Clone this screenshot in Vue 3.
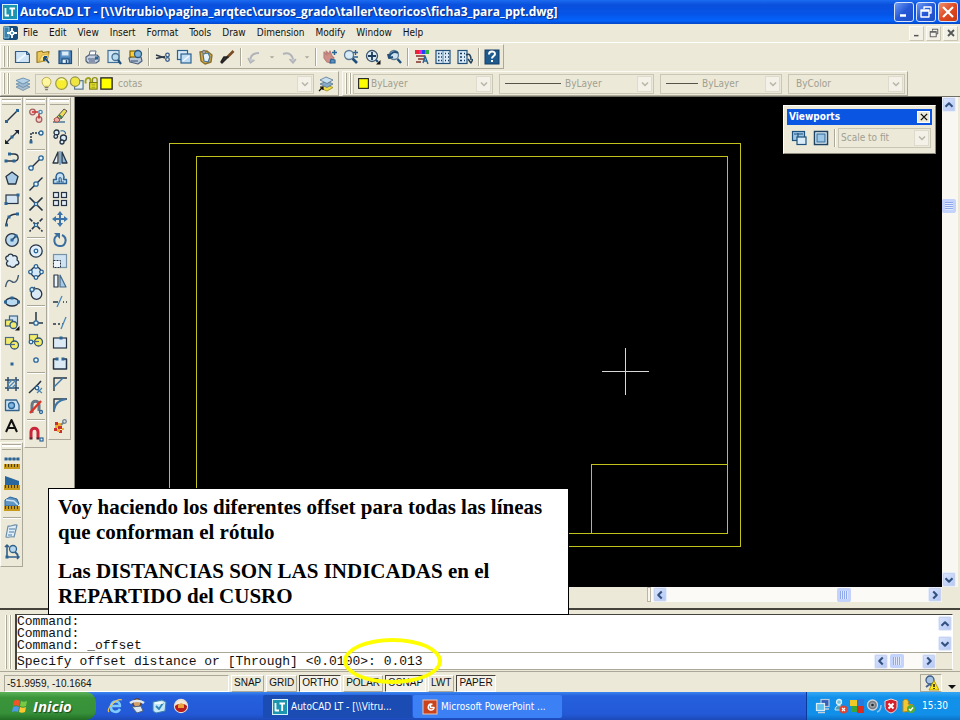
<script setup>
import { h } from 'vue'

const D = '#263445'
const B = '#2a6596'
const L = '#b9d7ee'

const line = (d, c = D, w = 1.4, f = 'none') =>
  `<path d="${d}" fill="${f}" stroke="${c}" stroke-width="${w}" stroke-linejoin="round"/>`
const dot = (x, y) => `<rect x="${x - 1.5}" y="${y - 1.5}" width="3" height="3" fill="${B}"/>`
const ring = (x, y, r = 2, f = '#e8f5ff', c = B) =>
  `<circle cx="${x}" cy="${y}" r="${r}" fill="${f}" stroke="${c}" stroke-width="1.3"/>`
const box = (x, y, w, hh, f = L, c = D) =>
  `<rect x="${x}" y="${y}" width="${w}" height="${hh}" fill="${f}" stroke="${c}" stroke-width="1.2"/>`
const lens = ring(6, 6, 4.5, '#d8ebf6', '#5f7c94') + line('M9.5 9.5L14 14', '#1d4d7a', 2.6)
const ruler = '<rect x="0" y="10" width="16" height="5" fill="#c79a1c"/>' +
  line('M1.5 10v3M4.5 10v3M7.5 10v3M10.5 10v3M13.5 10v3', '#4d3c0b', 1)
const shapes = box(1.5, 2.5, 8, 7, '#f3ec6a', '#4c6a83') + ring(10.5, 10, 4, '#f3ec6a', '#33566f') +
  line('M6 9.5h5', '#4c6a83', 1.2)

const glyphs = {
  new: line('M1.5 2.5h11l3 3v8h-14z', '#315d86', 1.2, '#cfe4f5') + line('M3.5 12L12 5', '#eef7fd', 2) + line('M12.5 2.5v3h3', '#315d86', 1),
  open: line('M2 3l5-1 1 1.5 6-1-2 9-10 2z', '#9a7a20', 1.2, '#ecc95c') + line('M4 12L7 6l7-1-4 7z', '#d9b44e', 1.2, '#fbe28b') + line('M9 8l5 6M9 8v4M9 8h3', '#1d4d7a', 1.8),
  save: box(2, 2, 12.5, 12.5, '#4d86bd', '#224e7a') + box(4.5, 2, 7.5, 5, '#dcecf8', '#6f9ec7') + box(5, 10, 7, 4.5, '#e9f2f8', '#224e7a') + line('M9.5 11v3', '#224e7a', 1.5),
  print: line('M5 7l1-5h6l-1 5', '#5d6f84', 1, '#fff') + line('M2 8l3-2h8l2 2v4l-3 2H4l-2-2z', '#4e617c', 1.2, '#c4cede') + line('M4 10h8M5 12h6', '#46597a', 1) + dot(12.5, 9),
  preview: box(2, 1.5, 11, 12, '#d5e8f7', '#416f97') + ring(9.5, 8, 3.5, '#b9d9ef', '#47708f') + line('M12 11l3 4', '#1d4d7a', 2.2),
  publish: line('M2 9l4-2 8 1 1 4-4 3-8-2z', '#4e617c', 1.2, '#b8c7da') + box(3, 2, 7, 6, '#ffcf30', '#7f6410') + ring(11, 5, 3.5, '#7fb5d9', '#285880') + line('M4 12h7', '#334a68', 1),
  cut: line('M1 6l9 3M1 9.5l9-2', '#2e3b49', 1.5) + ring(12.5, 6, 1.8, 'none', '#385d8a') + ring(12.5, 10.5, 1.8, 'none', '#385d8a'),
  copy: box(1.5, 1.5, 10, 9, '#d7eaf8', '#2d6291') + box(5, 5, 10, 9, '#bfdcf2', '#2d6291') + line('M7 12l6-5', '#eff8ff', 1.5),
  paste: line('M2 3l7-1 5 4-1 7-6 2-4-3z', '#8b6f2a', 1.4, '#d6ac48') + line('M5 5l5-1 2 4-2 5-4-1z', '#41749e', 1.2, '#e6f1fa') + ring(6, 3, 1.5, '#ccc', '#777'),
  brush: line('M14.5 2L8 8.5', '#7a4b24', 2.6) + line('M9 8L3 14l-1-1 3-5z', '#222', 1.5, '#333'),
  undo: line('M3 13c0-6 3-9 9-9', '#b0b3b8', 2) + line('M1 9l2.5 5 4-3', '#b0b3b8', 1.5, '#c5c8cc'),
  redo: line('M2 5c6-2 10 1 10 7', '#b0b3b8', 2) + line('M8.5 10l3.5 4 3-4', '#b0b3b8', 1.5, '#c5c8cc'),
  caret: '<path d="M5 7h6l-3 3z" fill="#a7a79d"/>',
  pan: line('M2 3l3 3-1-4 3 3 1-3 2 5 2 2-3 5-4-1-3-4z', '#b98079', 1.2, '#cf8f86') + line('M12.5 1v5M10 3.5h5', B, 1.5) + line('M9 10l4 1v3h-5z', B, 1.2, '#5b8ebd'),
  zoom: lens + line('M12.5 1v5M10 3.5h5M10 8h5', B, 1.3),
  extents: ring(7, 7, 5.5, '#d8ebf6', '#3c5268') + line('M7 3v8M3 7h8', '#1c3c59', 1.8) + line('M11 11l2 2', '#1d4d7a', 2.2) + '<path d="M15.5 11v4.5H11z" fill="#111"/>',
  zprev: ring(8, 6, 4.5, '#cde1ef', '#5f7c94') + line('M11.5 10L15 14', '#1d4d7a', 2.4) + line('M3 8c2-5 6-6 9-4M2 5l1 4 4-1', '#214d76', 2),
  props: '<path d="M1 1h4v4H1z" fill="#e23"/><path d="M5 1h3v4H5z" fill="#d2d"/><path d="M8 1h3v4H8z" fill="#24e"/><path d="M11 1h4v4h-4z" fill="#2cb53c"/>' + line('M2 7h9M4 10h7M2 13h5', '#9b5f55', 1.8) + line('M9 14l2-7 3 8M9 12h4', B, 1.4),
  center: box(1, 1.5, 14, 13, '#d8e9f7', '#234f78') + line('M8 2v12', '#5d87ab', 1) + line('M3 4.5h1.5M3 8h1.5M3 11.5h1.5M6 4.5h1M6 8h1M6 11.5h1M10 4.5h1M13 4.5h1M10 8h1M13 8h1M10 11.5h1M13 11.5h1', '#16395b', 1.5),
  sheet: box(1, 1.5, 9, 13, '#d8e9f7', '#234f78') + line('M3 4.5h2M3 8h2M3 11.5h2M7 4.5h1M7 8h1M7 11.5h1', '#16395b', 1.6) + line('M9 6c4-2 5 1 5 5M11 10l3 4 2-4', '#23405c', 1.5),
  help: '<rect x="1" y="1" width="14" height="14" fill="#1f5a8f" stroke="#123c62"/>' + line('M5 5.5c0-4 6-4 6-.5 0 2-3 2-3 4.5', '#fff', 2) + '<rect x="7" y="11" width="2" height="2" fill="#fff"/>',
  layers: line('M1 11l7-3 7 3-7 3.5z', '#6c8aa3', .8, '#a9bfd0') + line('M1 8l7-3 7 3-7 3.5z', '#6488a5', .8, '#9dbad1') + line('M1 4.5L8 2l7 2.5L8 8z', '#5c86a8', .8, '#b3d0e6'),
  layersPrev: line('M2 12l7-3 6 2.5L9 15z', '#9c8a20', .8, '#f0dc45') + line('M2 8l7-3 6 3-6 3.5z', '#54738d', .8, '#86aac6') + line('M2 4L8 1l7 3-6 3.5z', '#54738d', .8, '#c7dfef') + line('M1 15l4-4M2 11h3v3', '#111', 1.2),
  bulb: line('M5.5 11C1 6 4 1.5 8 1.5s7 4.5 2.5 9.5z', '#b7a748', 1, '#fff7a0') + line('M6 12.5h4M6.5 14.5h3', '#7d7d72', 1.3),
  sun: ring(8, 8, 6.2, '#f8ee31', '#9b9b48') + line('M5 4.5c2-1.5 4-1.5 6 0', '#fffbb7', 1.5),
  freeze: box(6, 5, 9, 9, '#e4eef5', '#4f7086') + ring(6.5, 6, 5, '#f0e642', '#90904d'),
  lock: line('M2 8c-2-6 5-8 5-3v2', '#a0a018', 2) + line('M9 7V4c0-3 5-3 5 0v3', '#8e8e16', 1.5) + box(6, 7, 8, 7, '#e4e22a', '#7b7b15') + line('M8 9.5h4M8 12h4', '#99991c', 1),
  yellow: '<rect x="2" y="2" width="12" height="12" fill="#ff0" stroke="#222" stroke-width="1.4"/>',
  line: line('M3 13L13 3') + dot(2.5, 13.5) + dot(13.5, 2.5),
  xline: line('M2.5 13.5l11-11') + '<path d="M1 15v-4.5l4.5 4.5zM15 1v4.5L10.500 1z" fill="#1b2430"/>' + dot(8, 8),
  pline: line('M2 11h8c6 0 5-7 0-7H6') + dot(2, 11) + dot(10, 11) + dot(5.5, 4),
  polygon: line('M8 2l6 4.5-2.300 7.500H4.300L2 6.5z', D, 1.3, '#a9cbe6'),
  rect: box(2, 4, 12, 8.5, '#d3e5f3') + dot(2, 12.5) + dot(14, 4),
  arc: line('M2.5 14C2 7 6 3 13 3') + dot(2.5, 14) + dot(5, 6) + dot(13.5, 3),
  circle: ring(8, 8, 6.3, '#bad8ee', D) + line('M8 8l4-4') + dot(8, 8) + dot(12, 4),
  cloud: line('M4 8C1 7 1 3 4 3c1-3 5-2 5 0 3-1 5 1 4 4 3 2 2 5-1 5-1 3-5 3-6 1-3 1-5-3-2-5z', D, 1.3, '#dcebf5'),
  spline: line('M1.5 14c2-10 5-6 7-5s5 0 6-7', '#445a70', 1.4),
  ellipse: '<ellipse cx="8" cy="8" rx="6.5" ry="4" fill="#badaf0" stroke="#263445" stroke-width="1.3"/>' + dot(1.5, 8) + dot(14.5, 8) + dot(8, 4),
  insert: box(5.5, 1, 8, 9, '#c9e0f2', '#3d668a') + box(1.5, 5, 7, 6, '#f3ec6a', '#385a76') + ring(9.5, 10, 3.5, '#f3ec6a', '#335c7e') + '<path d="M15.5 11v4.5H11z" fill="#111"/>',
  block: shapes,
  point: dot(8, 8),
  hatch: line('M4 1v14M12 1v14M1 4h14M1 12h14', '#2b4c6b', 1.5) + line('M4 8l4-4M4 12l8-8M8 12l4-4', '#4a88bc', 1.2),
  region: line('M1.5 3h11l2.5 5v5.5H1.5z', '#33638d', 1.3, '#cce2f3') + ring(7.5, 8.5, 3, '#83b7e0'),
  text: line('M2 14L7.5 2 13 14M4 10h7', '#111', 2),
  track: ring(4.5, 4, 2.8, '#f2d1cc', '#a76262') + ring(12.5, 4, 1.7, '#e8f5ff', '#5588b0') + ring(11, 11.5, 2.8, '#f2d1cc', '#a76262') + line('M4 4h6M11 5.5v5', '#d02f2f', 1.6),
  from: '<path d="M3 12V4h9" fill="none" stroke="#263445" stroke-width="1.5" stroke-dasharray="2 1"/>' + ring(13, 4) + dot(3, 13),
  endpoint: line('M3 13L13 3') + ring(3, 13, 2.2) + ring(13, 3, 2.2),
  midpoint: line('M1.5 14.5l13-13') + ring(8, 8, 2.2),
  inter: line('M1.5 1.5l13 13M14.5 1.5l-13 13', D, 1.7) + ring(8, 8, 1.6),
  appint: '<path d="M1.5 1.5l13 13M14.5 1.5l-13 13" stroke="#263445" stroke-width="1.6" stroke-dasharray="4 1.5"/>' + ring(8, 8, 1.6),
  centerSnap: ring(8, 8, 6.2, '#e0eff9', D) + ring(8, 8, 1.8),
  quadrant: ring(8, 8, 5, '#d5e9f7', D) + ring(8, 2.5, 1.8) + ring(8, 13.5, 1.8) + ring(2.5, 8, 1.8) + ring(13.5, 8, 1.8),
  tangent: ring(8.5, 9, 5.3, '#d9eaf6', D) + line('M2 7l5-5', '#405870', 1.3) + ring(4, 4.5, 2),
  perp: line('M1 12h14M8 1v11', D, 1.5) + ring(8, 12, 2.2),
  insSnap: shapes + ring(3, 10, 1.8),
  node: ring(8, 8, 2.2),
  nearest: line('M1 14c5-5 8-7 12-12', D, 1.5) + line('M9 10l5 4M14 9l-5 5', '#4f84af', 1.2) + ring(9, 9, 1.8),
  noSnap: line('M4 14V6c0-5 7-5 7 0v6', '#697684', 3) + line('M2 14L13 2', '#d83428', 2.4) + ring(13, 13, 1.5),
  osnap: line('M3 12V6c0-5 7-5 7 0v6', '#c9263c', 3) + line('M1.5 12.5h3M8.5 12.5h3', '#52202e', 2) + box(12, 12, 3, 3, '#e4f3fc', B),
  erase: line('M1 14h12', '#3d7197', 1.4) + line('M5 9l7-8 3 2-6 8z', '#55585a', 1, '#f2db55') + line('M2 11l3-2 3 3-2 2H3z', '#a0564e', 1, '#f1aaa2') + line('M7 7l3 3', '#3c7c5b', 2),
  copyObj: ring(4.5, 3.5, 2.5, '#dcecf7', D) + ring(3.8, 7.5, 1.8, '#dcecf7', D) + ring(11.5, 9, 3, '#dcecf7', D) + ring(10, 13, 2, '#dcecf7', D) + line('M8.5 2c4-1 5 1 5 3', B, 1.2),
  mirror: line('M6 2v11H1z', D, 1.3, '#eef4f8') + line('M8 1v14', '#3e7db2', 1.2) + line('M10 2v11h5z', D, 1.3, '#8ebbe0'),
  offset: line('M1.5 13.5V9.5h3c-3-9 10-9 7 0h3v4z', '#2d6291', 1.4, '#c5dff3') + line('M4.5 12h3c-2-6 3-6 1.5 0h3', '#2d6291', 1.2, '#edf6fc'),
  array: box(1.5, 1.5, 5, 5, '#e4edf3') + box(9.5, 1.5, 5, 5, '#e4edf3') + box(1.5, 9.5, 5, 5, '#e4edf3') + box(9.5, 9.5, 5, 5, '#e4edf3'),
  move: line('M8 2v12M2 8h12', '#3c74aa', 2) + '<path d="M8 0l3 4H5zM8 16l3-4H5zM0 8l4-3v6zM16 8l-4-3v6z" fill="#3c74aa"/>',
  rotate: line('M5 3.5C1 6 1.5 13 7 14c7 1 9-8 3-11', '#3b6d9d', 2) + '<path d="M2 1h6v6z" fill="#3b6d9d"/>',
  scale: box(1.5, 1.5, 13, 13, '#cfe3f3', '#7793a8') + '<rect x="1.5" y="7.5" width="7" height="7" fill="#edf5fa" stroke="#263445" stroke-dasharray="2 1"/>',
  stretch: line('M2 14V2h4v12z', D, 1.2, '#eef4f8') + line('M8 14V2l6 12z', '#446b8d', 1.2, '#a9cae4'),
  trim: line('M1 8h5M11 8h1M14 8h1', D, 1.5) + line('M5 13l5-11', '#4c89b8', 1.3),
  extend: line('M1 9h3M6 9h2M10 9h1', D, 1.5) + line('M9 14l5-12', '#4c89b8', 1.3),
  breakPt: box(1.5, 3, 13, 10, '#dceaf5') + dot(9, 3),
  breakObj: line('M5 3H1.5v10h13V3H11', D, 1.5, '#dceaf5') + dot(5, 3) + dot(11, 3),
  chamfer: line('M2 15V2h13', D, 1.4) + line('M2 11l9-9', '#3d76a6', 1.5),
  fillet: line('M2 15V2h13', D, 1.4) + line('M2 13C3 6 7 3 14 2', '#3d76a6', 2),
  explode: '<path d="M3 4h3v3H3zM6 8h4v3H6zM2 10h3v3H2zM7 12h3v3H7z" fill="#c9302b"/><path d="M6 5h3v3H6zM3 7h3v3H3zM5 11h3v3H5zM10 10h2v2h-2z" fill="#efad2b"/>' + line('M9 7l4-4', '#6e8190', 1.8) + ring(12.5, 3.5, 1.8, '#ddd', '#6e8190'),
  distance: line('M2 5h12', '#4d7798', 1) + dot(2, 5) + dot(14, 5) + dot(6, 5) + dot(10, 5) + ruler,
  area: '<path d="M1 1l14 5v4H1z" fill="#28669d"/>' + ruler,
  mass: line('M1 4l5-3 7 2 2 5-2 2H1z', '#28669d', 1, '#6096c4') + line('M2 4l8 1 4 4', '#cfe6f6', 1.5) + ruler,
  list: line('M4 3c4 1 5-2 9-1l-3 12c-4-1-5 1-8 0z', '#6b8da9', 1.2, '#dfeef8') + line('M5 6h6M5 9h5M4 12h4', '#4d7da5', 1.2),
  locate: line('M3 1v12h12M1 3l2-2 2 2M13 11l2 2-2 2', '#315f8a', 1.6) + ring(9, 5, 3.5, '#b6d8ef', '#315f8a') + line('M11 8l3 3', '#315f8a', 1.8) + dot(3, 13),
  vports: box(1.5, 1.5, 12, 9, '#9dc6e5', '#1f517d') + line('M3 4h9M7 3v7', '#1f517d', 1.2) + box(6, 7, 9, 7.5, '#d8ebf8', '#1f517d'),
  vport: '<rect x="1.5" y="1.5" width="13" height="13" fill="#e9f3fa" stroke="#1f4464" stroke-width="1.5"/>' + box(4, 4, 8, 8, '#9ec6e7', '#3e76a5'),
  lt: '<rect width="16" height="16" fill="#1c95b0"/><rect x=".5" y=".5" width="15" height="15" fill="none" stroke="#d8f2f7"/>' + line('M3.5 4v7.5H7M7.5 4.5H13M10.2 4.5V12', '#fff', 1.8),
  doc: '<rect x="0" y="1" width="15" height="14" rx="2" fill="#184e7c"/>' + line('M1 2h5v11H1z', '#8dc4df', 1, '#3d82ab') + line('M9 3v10M4 8h10', '#fff', 1.8) + box(7.5, 6.5, 3, 3, '#2388b6', '#fff'),
  flag: '<path d="M2 3c2-2 4-1 6 0L7 8C5 7 3 7 1 8z" fill="#f0552a"/><path d="M9 3c2 1 4 1 6 0l-1 5c-2 1-4 1-6 0z" fill="#7ac943"/><path d="M1 9c2-1 4-1 6 0l-1 5c-2-1-4-1-6 0z" fill="#4c9af0"/><path d="M8 9c2 1 4 1 6 0l-1 5c-2 1-4 1-6 0z" fill="#fdc72f"/>',
  ie: line('M13 11c-3 5-10 3-9-3s9-6 9 0H5', '#7ecbff', 2.6) + line('M2 14C-1 11 9 0 15 2', '#f0c64d', 1.2),
  mail: ring(8, 5, 4, '#d3a06a', '#5c3b22') + line('M1 5c4-3 10-3 14 0', '#dfe6ed', 2.5) + line('M3 9l9-1 2 5-6 2z', '#51647b', 1, '#dce7f1'),
  desk: line('M2 4l9-2 4 2-1 9-9 2-3-2z', '#3e7fae', 1, '#c3e7f7') + line('M5 8l3 3 4-6', '#2d84b8', 1.8) + line('M4 5h8', '#fff', 1.5),
  firefox: ring(8, 8, 6.5, '#f3ead7', '#eadfd1') + '<path d="M2 8c0 8 12 8 12 0-3-3-9-3-12 0z" fill="#b91c1c"/><path d="M5 7c2-2 5-2 6 0v3H5z" fill="#eca43a"/>',
  ppt: '<rect x="1" y="1" width="14" height="14" fill="#c9431d" stroke="#f1c3ac"/>' + line('M10.5 5.5c-4-2-6 4-2 5.5 2 .5 3.5-1 3.5-2.5H8.5V5', '#fff', 1.5),
  net: box(6, 1.5, 8, 7, '#385fb8', '#b8cbdc') + box(1.5, 5.5, 8, 7, '#62c3ef', '#d9edf7') + line('M3 14.5h7M10 11h4', '#c4d0da', 1.5),
  users: ring(7, 4, 2.5, '#72c4dd', '#def0f5') + line('M3 12c0-6 8-6 8 0z', '#cde5ec', 1, '#4e9cb4') + '<circle cx="11.5" cy="11.5" r="4" fill="#dd4433"/>' + line('M10 10l3 3M13 10l-3 3', '#fff', 1.2),
  squares: '<rect x="1" y="2" width="7" height="6" fill="#f0c928"/><rect x="8" y="1" width="7" height="7" fill="#287ade"/><rect x="2" y="8" width="6" height="6" fill="#38a63a"/><rect x="8" y="8" width="7" height="7" fill="#d92d22"/>',
  sound: ring(6.5, 7, 5, '#767c82', '#cfd4d8') + ring(6.5, 7, 2, '#25292d', '#9da4aa') + line('M11 14c3-1 4-4 4-7', '#8fc5f0', 1.5),
  shield: line('M8 1l6 2v5c0 4-3 6-6 7-3-1-6-3-6-7V3z', '#f2d9d7', 1, '#d3202c') + line('M5.5 5.5l5 5M10.5 5.5l-5 5', '#fff', 2),
  update: line('M3 3c3-4 7 0 5 3l5 1-2 6-8 1z', '#bd8b13', 1, '#f5c631') + '<circle cx="11" cy="11" r="4" fill="#57ae35"/>' + line('M9 11l1.5 1.5 2.5-3', '#fff', 1.4),
  comm: ring(7, 5, 4, '#a6c2e1', '#3c5c8a') + line('M3 12l4-3 3 4', '#47658c', 2) + line('M11 5.5l5 9.5H6z', '#a48c00', .8, '#ffe81a') + line('M11 9v3M11 13v1', '#111', 1.5),
  up: line('M4 10l4-4 4 4', '#31517f', 2.4),
  down: line('M4 6l4 4 4-4', '#31517f', 2.4),
  left: line('M10 4L6 8l4 4', '#31517f', 2.4),
  right: line('M6 4l4 4-4 4', '#31517f', 2.4),
  chev: line('M4 6l4 4 4-4', '#b9b8ab', 2.2),
  min: line('M4 11.5h6', '#fff', 2.5),
  max: line('M6 5V3h7v6h-2', '#fff', 1.4) + line('M3 6h8v7H3zM3 7h8', '#fff', 1.4),
  close: line('M3 3l10 10M13 3L3 13', '#fff', 2.2),
  dmin: line('M4 11.5h6', '#555', 2),
  dmax: line('M6 5V3h7v6h-2', '#666', 1.4) + line('M3 6h8v7H3zM3 7h8', '#666', 1.4),
  dclose: line('M4 4l8 8M12 4l-8 8', '#555', 2.4),
  xclose: line('M3 3l10 10M13 3L3 13', '#111', 2.2),
}

const Icon = (props) => h('svg', { viewBox: '0 0 16 16', class: 'icon', 'aria-hidden': 'true', innerHTML: glyphs[props.name] })
Icon.props = ['name']

const menus = ['File', 'Edit', 'View', 'Insert', 'Format', 'Tools', 'Draw', 'Dimension', 'Modify', 'Window', 'Help']
const standard = ['new', 'open', 'save', '|', 'print', 'preview', 'publish', '|', 'cut', 'copy', 'paste', 'brush', '|',
  'undo', 'caret', 'redo', 'caret', '|', 'pan', 'zoom', 'extents', 'zprev', '|', 'props', 'center', 'sheet', '|', 'help']
const draw = ['line', 'xline', 'pline', 'polygon', 'rect', 'arc', 'circle', 'cloud', 'spline', 'ellipse', 'insert', 'block', 'point', 'hatch', 'region', 'text']
const inquiry = ['distance', 'area', 'mass', '|', 'list', 'locate']
const snaps = ['track', 'from', '|', 'endpoint', 'midpoint', 'inter', 'appint', '|', 'centerSnap', 'quadrant', 'tangent', '|', 'perp', 'insSnap', 'node', '|', 'nearest', 'noSnap', '|', 'osnap']
const modify = ['erase', 'copyObj', 'mirror', 'offset', 'array', 'move', 'rotate', 'scale', 'stretch', 'trim', 'extend', 'breakPt', 'breakObj', 'chamfer', 'fillet', 'explode']
const layerIcons = ['bulb', 'sun', 'freeze', 'lock', 'yellow']
const toggles = [['SNAP', false], ['GRID', false], ['ORTHO', true], ['POLAR', false], ['OSNAP', true], ['LWT', false], ['PAPER', true]]
const tray = ['net', 'users', 'squares', 'sound', 'shield', 'update']
</script>

<template>
  <div class="desktop">
    <header class="titlebar">
      <Icon name="lt" />
      <h1>AutoCAD LT - [\\Vitrubio\pagina_arqtec\cursos_grado\taller\teoricos\ficha3_para_ppt.dwg]</h1>
      <button class="win" aria-label="Minimize"><Icon name="min" /></button>
      <button class="win" aria-label="Restore"><Icon name="max" /></button>
      <button class="win red" aria-label="Close"><Icon name="close" /></button>
    </header>

    <nav class="menubar">
      <Icon name="doc" />
      <button v-for="m in menus" :key="m" class="menu">{{ m }}</button>
      <span class="grow"></span>
      <button class="docbtn" aria-label="Minimize drawing"><Icon name="dmin" /></button>
      <button class="docbtn" aria-label="Restore drawing"><Icon name="dmax" /></button>
      <button class="docbtn" aria-label="Close drawing"><Icon name="dclose" /></button>
    </nav>

    <div class="band">
      <div class="bar standard">
        <span class="grip"></span>
        <template v-for="(t, i) in standard" :key="i">
          <span v-if="t === '|'" class="sep"></span>
          <button v-else class="tool" :class="{ slim: t === 'caret' }" :aria-label="t"><Icon :name="t" /></button>
        </template>
      </div>
    </div>

    <div class="band second">
      <div class="bar layers">
        <span class="grip"></span>
        <button class="tool wide" aria-label="layers"><Icon name="layers" /></button>
        <div class="combo">
          <Icon v-for="n in layerIcons" :key="n" :name="n" />
          <select aria-label="Layer"><option>cotas</option></select>
          <span class="drop"><Icon name="chev" /></span>
        </div>
        <button class="tool wide" aria-label="previous layer"><Icon name="layersPrev" /></button>
      </div>
      <div class="bar properties">
        <span class="grip"></span>
        <div class="combos">
          <div class="combo color">
            <Icon name="yellow" />
            <select aria-label="Color"><option>ByLayer</option></select>
            <span class="drop"><Icon name="chev" /></span>
          </div>
          <div class="combo type">
            <span class="stroke"></span>
            <select aria-label="Linetype"><option>ByLayer</option></select>
            <span class="drop"><Icon name="chev" /></span>
          </div>
          <div class="combo weight">
            <span class="stroke"></span>
            <select aria-label="Lineweight"><option>ByLayer</option></select>
            <span class="drop"><Icon name="chev" /></span>
          </div>
          <div class="combo plot">
            <select aria-label="Plot style"><option>ByColor</option></select>
            <span class="drop"><Icon name="chev" /></span>
          </div>
        </div>
      </div>
    </div>

    <main class="workspace">
      <aside class="dock">
        <div class="stack">
          <div class="palette draw">
            <span class="hgrip"></span>
            <button v-for="t in draw" :key="t" class="vtool" :aria-label="t"><Icon :name="t" /></button>
          </div>
          <div class="palette inquiry">
            <span class="hgrip"></span>
            <template v-for="(t, i) in inquiry" :key="i">
              <span v-if="t === '|'" class="hsep"></span>
              <button v-else class="vtool" :aria-label="t"><Icon :name="t" /></button>
            </template>
          </div>
        </div>
        <div class="palette snaps">
          <span class="hgrip"></span>
          <template v-for="(t, i) in snaps" :key="i">
            <span v-if="t === '|'" class="hsep"></span>
            <button v-else class="vtool" :aria-label="t"><Icon :name="t" /></button>
          </template>
        </div>
        <div class="palette modify">
          <span class="hgrip"></span>
          <button v-for="t in modify" :key="t" class="vtool" :aria-label="t"><Icon :name="t" /></button>
        </div>
      </aside>

      <section class="viewport">
        <div class="view-row">
          <svg class="drawing" viewBox="0 0 867 490" preserveAspectRatio="xMinYMin meet" role="img" aria-label="Drawing">
            <g fill="none" stroke="#c2c21c" shape-rendering="crispEdges">
              <rect x="94.5" y="46.5" width="571" height="403" />
              <rect x="121.5" y="59.5" width="531" height="377" />
              <path d="M516.5 436.5v-69h136" />
            </g>
            <path d="M527 274.5h47M550.5 251v47" stroke="#d8d8d8" shape-rendering="crispEdges" />
          </svg>
          <div class="vscroll">
            <button class="sb" aria-label="Scroll up"><Icon name="up" /></button>
            <span class="track-a"></span>
            <span class="thumb"></span>
            <span class="track-b"></span>
            <button class="sb" aria-label="Scroll down"><Icon name="down" /></button>
          </div>
        </div>
        <div class="hrow">
          <span class="split"></span>
          <div class="hscroll">
            <button class="sb" aria-label="Scroll left"><Icon name="left" /></button>
            <span class="track-h"></span>
            <span class="thumb"></span>
            <span class="track-i"></span>
            <button class="sb" aria-label="Scroll right"><Icon name="right" /></button>
          </div>
        </div>
      </section>

      <div class="viewports">
        <div class="vp-title"><h2>Viewports</h2><button aria-label="Close viewports"><Icon name="xclose" /></button></div>
        <div class="vp-body">
          <button class="tool" aria-label="Viewports dialog"><Icon name="vports" /></button>
          <button class="tool" aria-label="Single viewport"><Icon name="vport" /></button>
          <span class="sep"></span>
          <div class="combo">
            <select aria-label="Viewport scale"><option>Scale to fit</option></select>
            <span class="drop"><Icon name="chev" /></span>
          </div>
        </div>
      </div>

      <div class="note">
        <p>Voy haciendo los diferentes offset para todas las líneas que conforman el rótulo</p>
        <p>Las DISTANCIAS SON LAS INDICADAS en el REPARTIDO del CUSRO</p>
      </div>
    </main>

    <section class="command">
      <span class="grip"></span>
      <div class="console">
        <div class="history">
          <pre>Command:
Command:
Command: _offset</pre>
          <div class="mini">
            <button class="sb" aria-label="History up"><Icon name="up" /></button>
            <button class="sb" aria-label="History down"><Icon name="down" /></button>
          </div>
        </div>
        <div class="prompt">
          <input aria-label="Command line" value="Specify offset distance or [Through] &lt;0.0100&gt;: 0.013" />
          <div class="pscroll">
            <button class="sb" aria-label="Line left"><Icon name="left" /></button>
            <span class="thumb"></span>
            <span class="grow"></span>
            <button class="sb" aria-label="Line right"><Icon name="right" /></button>
          </div>
        </div>
      </div>
      <span class="highlight"></span>
    </section>

    <footer class="status">
      <output class="coords">-51.9959, -10.1664</output>
      <button v-for="[t, on] in toggles" :key="t" class="toggle" :class="{ on }">{{ t }}</button>
      <span class="grow"></span>
      <span class="comm"><Icon name="comm" /></span>
      <button class="more" aria-label="Status menu"></button>
    </footer>

    <div class="taskbar">
      <button class="start"><Icon name="flag" /><span>Inicio</span></button>
      <div class="quick">
        <a href="#" aria-label="Browser"><Icon name="ie" /></a>
        <a href="#" aria-label="Mail"><Icon name="mail" /></a>
        <a href="#" aria-label="Desktop"><Icon name="desk" /></a>
        <a href="#" aria-label="Web"><Icon name="firefox" /></a>
      </div>
      <button class="task active"><Icon name="lt" />AutoCAD LT - [\\Vitru...</button>
      <button class="task"><Icon name="ppt" />Microsoft PowerPoint ...</button>
      <span class="grow"></span>
      <div class="tray">
        <Icon v-for="n in tray" :key="n" :name="n" />
        <time>15:30</time>
      </div>
    </div>
  </div>
</template>

<style>
body {
  margin: 0;
}
</style>

<style scoped>
.desktop {
  display: flex;
  flex-direction: column;
  height: 100vh;
  overflow: hidden;
  background: #ece9d8;
  color: #111;
  font: 10px/14px "DejaVu Sans Condensed", "Open Sans", sans-serif;
}
.desktop * {
  box-sizing: border-box;
}
button,
select,
input {
  font: inherit;
  color: inherit;
  margin: 0;
  padding: 0;
  border: 0;
  background: none;
  appearance: none;
  border-radius: 0;
}
button {
  display: flex;
  align-items: center;
  justify-content: center;
}
.icon {
  width: 16px;
  height: 16px;
  flex: none;
  display: block;
}
.grow {
  flex: 1;
}

.titlebar {
  display: flex;
  align-items: center;
  gap: 2px;
  height: 24px;
  padding: 0 2px;
  background: linear-gradient(#1c6cf0, #0a50dc 20%, #0554e8 60%, #0463fb 85%, #0346c8);
}
.titlebar h1 {
  flex: 1;
  margin: 0;
  color: #fff;
  font: bold 12px/20px "Open Sans", sans-serif;
  text-shadow: 1px 1px 1px #0a2c80;
  white-space: nowrap;
}
.win {
  width: 20px;
  height: 20px;
  border: 1px solid #d5e3fb;
  border-radius: 3px;
  background: linear-gradient(135deg, #6f9bf4, #2558d8 50%, #1f4fc4);
}
.win.red {
  background: linear-gradient(135deg, #f0906f, #e04a22 50%, #c93a12);
}

.menubar {
  display: flex;
  align-items: center;
  height: 19px;
  padding: 0 2px 0 3px;
  border-bottom: 1px solid #fff;
}
.menu {
  padding: 0 7px 0 4px;
}
.docbtn {
  width: 15px;
  height: 15px;
  margin-left: 2px;
  border: 1px solid #fbfaf5;
  border-right-color: #c9c6b4;
  border-bottom-color: #c9c6b4;
  background: #f3f1e6;
}
.docbtn .icon {
  width: 12px;
  height: 12px;
}

.band {
  display: flex;
  height: 27px;
  padding-top: 1px;
}
.band.second {
  border-bottom: 1px solid #716f64;
}
.bar {
  display: flex;
  align-items: center;
  height: 25px;
  border: 1px solid #fbfaf3;
  border-right-color: #aca899;
  border-bottom-color: #aca899;
}
.grip {
  flex: none;
  align-self: stretch;
  width: 7px;
  margin: 1px 1px 1px 2px;
  border: solid #fff;
  border-width: 0 1px;
  background: linear-gradient(90deg, #aca899 1px, #ece9d8 1px, #ece9d8 3px, #fff 3px, #fff 4px, #aca899 4px, #aca899 5px, #ece9d8 5px);
}
.standard {
  width: 504px;
}
.tool {
  flex: 1;
  height: 20px;
}
.tool.slim {
  flex: 0.6;
}
.tool.slim .icon {
  width: 12px;
}
.tool.wide {
  flex: none;
  width: 24px;
}
.sep {
  flex: none;
  width: 2px;
  height: 18px;
  margin: 0 2px;
  border-left: 1px solid #aca899;
  border-right: 1px solid #fff;
}
.layers {
  width: 339px;
}
.properties {
  width: 566px;
  margin-left: 3px;
}
.combos {
  display: flex;
  flex: 1;
  gap: 6px;
  padding-right: 2px;
}
.combo {
  display: flex;
  flex: 1;
  align-items: center;
  height: 20px;
  min-width: 0;
  padding: 1px 1px 1px 3px;
  border: 1px solid #c9c6b6;
  color: #a19f91;
}
.layers .combo .icon {
  width: 15px;
  height: 15px;
}
.combo select {
  flex: 1;
  min-width: 0;
  padding-left: 4px;
}
.color {
  flex: none;
  width: 140px;
}
.color > .icon {
  width: 13px;
  height: 13px;
}
.color select {
  padding-left: 1px;
}
.type {
  flex: none;
  width: 155px;
  padding-left: 5px;
}
.weight {
  flex: none;
  width: 122px;
  padding-left: 5px;
}
.stroke {
  flex: none;
  width: 56px;
  height: 1px;
  background: #55534a;
}
.weight .stroke {
  width: 32px;
}
.drop {
  display: flex;
  align-items: center;
  justify-content: center;
  width: 15px;
  height: 16px;
  border: 1px solid #dedbcd;
  background: #f4f2e8;
}
.layers .drop .icon,
.drop .icon {
  width: 12px;
  height: 12px;
}

.workspace {
  position: relative;
  z-index: 1;
  display: flex;
  flex: 1;
  min-height: 0;
  border-bottom: 2px solid #45433b;
}
.dock {
  display: flex;
  flex: none;
  align-items: flex-start;
  gap: 1px;
  width: 75px;
  border-right: 1px solid #8a887a;
}
.palette {
  display: flex;
  flex-direction: column;
  align-items: center;
  width: 23px;
  padding: 8px 0 3px;
  border: 1px solid #fbfaf3;
  border-right-color: #aca899;
  border-bottom-color: #aca899;
}
.hgrip {
  flex: none;
  width: 19px;
  height: 6px;
  margin: -7px 0 1px;
  border: solid #aca899;
  border-width: 1px 0;
  background: linear-gradient(#fff 2px, #ece9d8 2px);
}
.vtool {
  flex: 1;
  width: 20px;
  min-height: 0;
}
.hsep {
  flex: none;
  width: 18px;
  height: 2px;
  margin: 2px 0;
  border-top: 1px solid #aca899;
  border-bottom: 1px solid #fff;
}
.draw {
  height: 343px;
}
.inquiry {
  height: 125px;
  margin-top: 2px;
}
.snaps {
  height: 351px;
}
.modify {
  height: 343px;
}

.viewport {
  display: flex;
  flex: 1;
  flex-direction: column;
  min-width: 0;
}
.view-row {
  display: flex;
  flex: 1;
  min-height: 0;
}
.drawing {
  display: block;
  flex: 1;
  min-width: 0;
  height: 100%;
  background: #000;
}
.vscroll {
  display: flex;
  flex-direction: column;
  width: 18px;
  padding: 0 3px 0 0;
  background: #f8f7f2;
  border-right: 2px solid #ece9d8;
}
.sb {
  flex: none;
  width: 14px;
  height: 15px;
  border: 1px solid #e6eefc;
  border-radius: 2px;
  background: linear-gradient(135deg, #dbe5fd, #b3c6f4);
  box-shadow: 0 0 0 1px #c6d2ee inset;
}
.sb .icon {
  width: 14px;
  height: 14px;
}
.thumb {
  flex: none;
  width: 14px;
  height: 14px;
  border: 3px solid #c3d3fb;
  border-radius: 2px;
  background: repeating-linear-gradient(#8fa9ec 0 1px, #dfe8fd 1px 2px);
}
.track-a {
  flex: 86;
}
.track-b {
  flex: 357;
}
.hrow {
  display: flex;
  justify-content: flex-end;
  height: 21px;
  padding: 0 18px 6px 0;
}
.split {
  width: 4px;
  border: 1px solid #b9b6a5;
  background: #f7f5ec;
}
.hscroll {
  display: flex;
  align-items: center;
  width: calc(34% - 4px);
  height: 15px;
  padding-left: 2px;
  background: #fbfaf7;
}
.hscroll .thumb,
.pscroll .thumb {
  background: repeating-linear-gradient(90deg, #8fa9ec 0 1px, #dfe8fd 1px 2px);
}
.track-h {
  flex: 168;
}
.track-i {
  flex: 76;
}

.viewports {
  position: absolute;
  top: 8px;
  right: 24px;
  width: 153px;
  padding: 3px;
  border: 1px solid #fff;
  border-right-color: #8d8b7e;
  border-bottom-color: #8d8b7e;
  background: #ece9d8;
}
.vp-title {
  display: flex;
  align-items: center;
  justify-content: space-between;
  height: 16px;
  padding: 0 2px;
  background: #0a55e2;
}
.vp-title h2 {
  margin: 0;
  color: #fff;
  font: bold 10px/14px "DejaVu Sans Condensed", sans-serif;
}
.vp-title button {
  width: 13px;
  height: 12px;
  border: 1px solid #fff;
  background: #ece9d8;
}
.vp-title .icon {
  width: 10px;
  height: 10px;
}
.vp-body {
  display: flex;
  align-items: center;
  height: 25px;
  padding: 1px 1px 0;
}
.vp-body .tool {
  flex: none;
  width: 22px;
}
.vp-body .combo {
  padding-left: 0;
}
.vp-body select {
  padding-left: 2px;
}

.note {
  position: absolute;
  left: 48px;
  bottom: -7px;
  width: 521px;
  padding: 6px 9px 5px;
  border: 1px solid #000;
  background: #fff;
  color: #000;
  font: bold 21px/25px "Liberation Serif", serif;
}
.note p {
  margin: 0;
}
.note p + p {
  margin-top: 14px;
}

.command {
  position: relative;
  display: flex;
  flex: none;
  height: 61px;
  padding: 4px 7px 1px 3px;
}
.console {
  flex: 1;
  min-width: 0;
  margin-left: 2px;
  border: 2px solid #45433b;
  border-top-width: 1px;
  border-right: 1px solid #fff;
  border-bottom: 1px solid #aca899;
  background: #fff;
  font: 13px/12px "Liberation Mono", monospace;
}
.history {
  display: flex;
  justify-content: space-between;
  height: 37px;
}
.history pre {
  margin: 0;
  padding-top: 1px;
  font: inherit;
}
.mini {
  display: flex;
  flex-direction: column;
  justify-content: space-between;
  padding: 1px 0;
}
.prompt {
  display: flex;
  height: 17px;
  border-top: 1px solid #aca899;
}
.prompt input {
  flex: 1;
  min-width: 0;
}
.pscroll {
  display: flex;
  align-items: center;
  gap: 2px;
  width: 78px;
  padding-right: 16px;
  background: linear-gradient(90deg, #fbfaf7 62px, #ece9d8 62px);
}
.highlight {
  position: absolute;
  left: 343px;
  top: 28px;
  width: 99px;
  height: 46px;
  border: 4px solid #ff0;
  border-radius: 50%;
  z-index: 2;
}

.status {
  display: flex;
  flex: none;
  align-items: center;
  gap: 2px;
  height: 21px;
  padding: 2px 4px 0;
  border-top: 1px solid #aca899;
  font: 10px/14px "Liberation Sans", sans-serif;
}
.coords {
  width: 225px;
  height: 17px;
  padding: 1px 2px;
  border: 1px solid #aca899;
  border-right-color: #fff;
  border-bottom-color: #fff;
}
.toggle {
  height: 17px;
  padding: 0 2px;
  border: 1px solid #fff;
  border-right-color: #aca899;
  border-bottom-color: #aca899;
}
.toggle.on {
  border-color: #45433b #fff #fff #45433b;
  background: #f4f2e8;
}
.comm {
  padding: 0 2px;
  border: 1px solid #aca899;
  border-right-color: #fff;
}
.more {
  width: 8px;
  height: 4px;
  margin: 8px 0 0 4px;
  background: #111;
  clip-path: polygon(0 0, 100% 0, 50% 100%);
}

.taskbar {
  display: flex;
  flex: none;
  align-items: stretch;
  height: 28px;
  background: linear-gradient(#3a86f0, #2560dd 14%, #2359d6 80%, #1d49b8);
  color: #fff;
}
.start {
  gap: 5px;
  width: 96px;
  padding-right: 12px;
  border-radius: 0 10px 10px 0;
  background: linear-gradient(#5db35a, #3a9439 20%, #37913a 75%, #226d24);
  font: italic bold 15px/20px "Open Sans", sans-serif;
  text-shadow: 1px 1px 1px #1c4a1c;
}
.quick {
  display: flex;
  align-items: center;
  gap: 6px;
  width: 167px;
  padding-left: 11px;
}
.task {
  justify-content: flex-start;
  gap: 3px;
  width: 149px;
  margin: 3px 1px 2px 0;
  padding: 0 9px;
  border-radius: 2px;
  background: #3b80f5;
  white-space: nowrap;
  overflow: hidden;
}
.task.active {
  background: #1b4cb4;
}
.tray {
  display: flex;
  align-items: center;
  gap: 1px;
  width: 154px;
  padding: 0 12px 0 8px;
  border-left: 1px solid #0a3a9c;
  background: linear-gradient(#35a8f5, #1290ea 20%, #1190ea 80%, #0c73c8);
}
.tray time {
  margin-left: auto;
}
</style>
